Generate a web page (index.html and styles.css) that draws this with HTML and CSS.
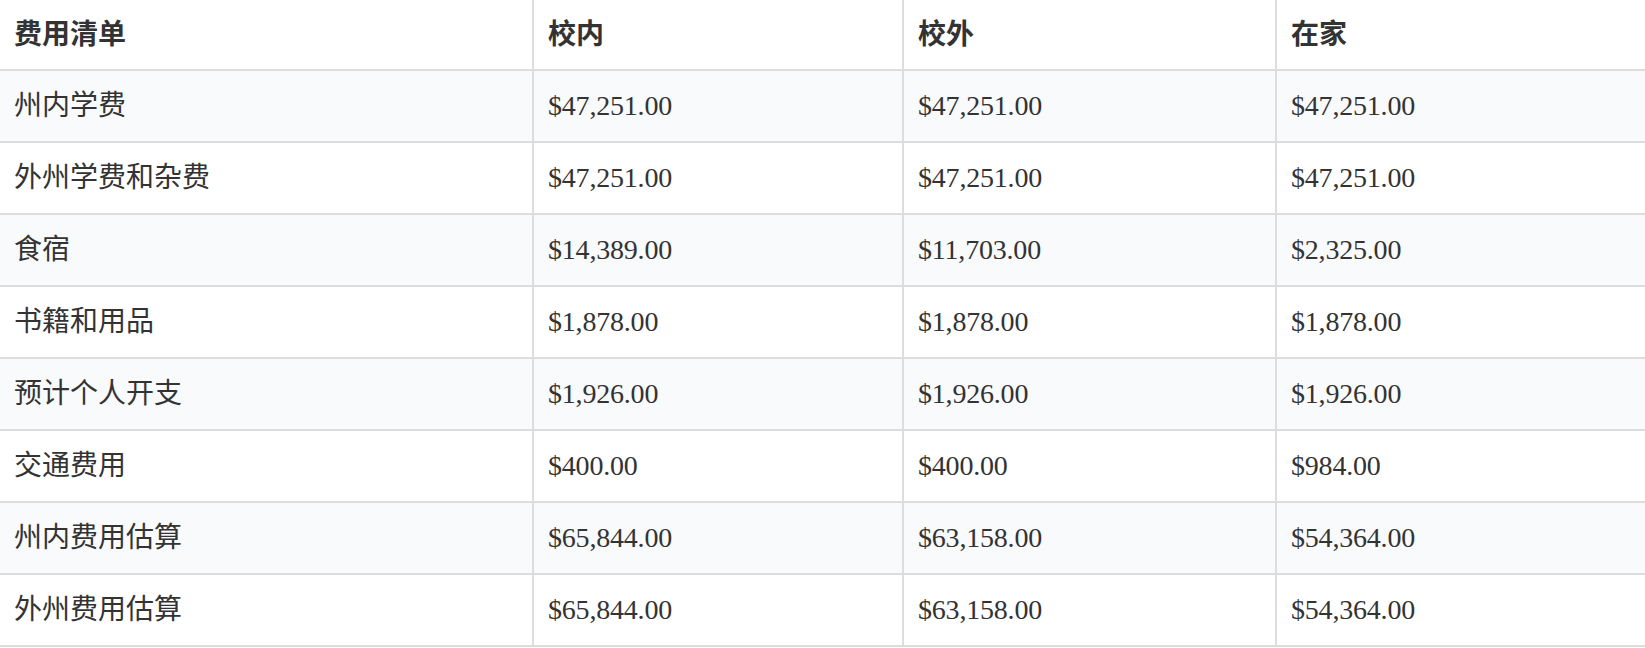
FILE: index.html
```html
<!DOCTYPE html>
<html lang="zh-CN">
<head>
<meta charset="utf-8">
<title>费用清单</title>
<link rel="stylesheet" href="styles.css">
</head>
<body>
<table class="cost-table">
  <colgroup>
    <col class="col-item">
    <col class="col-a">
    <col class="col-b">
    <col class="col-c">
  </colgroup>
  <thead>
    <tr>
      <th>费用清单</th>
      <th>校内</th>
      <th>校外</th>
      <th>在家</th>
    </tr>
  </thead>
  <tbody>
    <tr>
      <td>州内学费</td>
      <td class="num">$47,251.00</td>
      <td class="num">$47,251.00</td>
      <td class="num">$47,251.00</td>
    </tr>
    <tr>
      <td>外州学费和杂费</td>
      <td class="num">$47,251.00</td>
      <td class="num">$47,251.00</td>
      <td class="num">$47,251.00</td>
    </tr>
    <tr>
      <td>食宿</td>
      <td class="num">$14,389.00</td>
      <td class="num">$11,703.00</td>
      <td class="num">$2,325.00</td>
    </tr>
    <tr>
      <td>书籍和用品</td>
      <td class="num">$1,878.00</td>
      <td class="num">$1,878.00</td>
      <td class="num">$1,878.00</td>
    </tr>
    <tr>
      <td>预计个人开支</td>
      <td class="num">$1,926.00</td>
      <td class="num">$1,926.00</td>
      <td class="num">$1,926.00</td>
    </tr>
    <tr>
      <td>交通费用</td>
      <td class="num">$400.00</td>
      <td class="num">$400.00</td>
      <td class="num">$984.00</td>
    </tr>
    <tr>
      <td>州内费用估算</td>
      <td class="num">$65,844.00</td>
      <td class="num">$63,158.00</td>
      <td class="num">$54,364.00</td>
    </tr>
    <tr>
      <td>外州费用估算</td>
      <td class="num">$65,844.00</td>
      <td class="num">$63,158.00</td>
      <td class="num">$54,364.00</td>
    </tr>
  </tbody>
</table>
</body>
</html>
```

FILE: styles.css
```css
html, body {
  margin: 0;
  padding: 0;
  background: #ffffff;
}

body {
  font-family: "Liberation Serif", "Noto Sans CJK SC", serif;
  color: #333333;
}

.cost-table {
  width: 1645px;
  table-layout: fixed;
  border-collapse: separate;
  border-spacing: 0;
  font-size: 28px;
}

.col-item { width: 532px; }
.col-a { width: 370px; }
.col-b { width: 373px; }
.col-c { width: 370px; }

.cost-table th,
.cost-table td {
  text-align: left;
  vertical-align: middle;
  padding: 0 0 0 14px;
  border-bottom: 2px solid #dddddd;
  line-height: 1;
  white-space: nowrap;
}

.cost-table th + th,
.cost-table td + td {
  border-left: 2px solid #dddddd;
}

.cost-table th {
  height: 69px;
  font-weight: bold;
}

.cost-table td {
  height: 70px;
  font-weight: normal;
}

.cost-table tbody tr:nth-child(odd) td {
  background: #f9fafc;
}

.cost-table .num {
  letter-spacing: -0.2px;
  padding-left: 14px;
}
```
